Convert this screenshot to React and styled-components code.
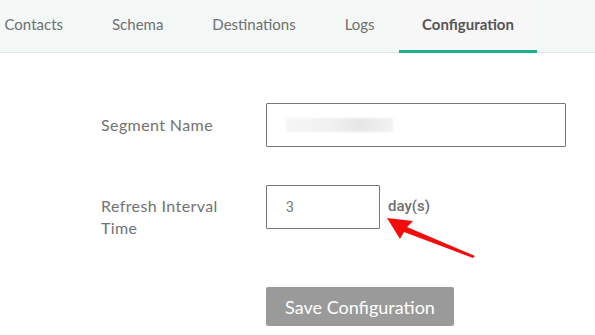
import styled, { createGlobalStyle } from 'styled-components';

const GlobalStyle = createGlobalStyle`
  body {
    margin: 0;
    background: #fff;
    font-family: Lato, "Open Sans", sans-serif;
  }
`;

const Page = styled.div`
  width: 595px;
  height: 335px;
  overflow: hidden;
  position: relative;
`;

const TabBar = styled.div`
  display: flex;
  height: 52px;
  background: #f3f8f7;
  border-bottom: 1px solid #e3e6e5;
  margin-left: -20px;
`;

const Tab = styled.div`
  display: flex;
  align-items: center;
  padding: 0 ${({ active }) => active ? 23 : 24.5}px 3px;
  font-size: 15px;
  color: ${({ active }) => active ? '#555' : '#6f6f6f'};
  font-weight: ${({ active }) => active ? 700 : 400};
  background: ${({ active }) => active ? '#f7f7f7' : 'transparent'};
  border-bottom: 3px solid ${({ active }) => active ? '#1bb08f' : 'transparent'};
  margin-bottom: -1px;
`;

const Form = styled.div`
  display: flex;
  flex-direction: column;
  gap: 38px;
  padding: 50px 0 0 101px;
`;

const Row = styled.div`
  display: flex;
  align-items: ${({ top }) => top ? 'flex-start' : 'center'};
  margin-top: ${({ offset }) => offset || 0}px;
`;

const Label = styled.div`
  width: 165px;
  font-size: 16px;
  line-height: 22px;
  color: #727272;
  letter-spacing: 0.4px;
  padding: ${({ top }) => top ? '10px 30px 0 0' : '0 30px 0 0'};
  box-sizing: border-box;
`;

const Input = styled.div`
  width: ${({ w }) => w}px;
  height: 44px;
  box-sizing: border-box;
  border: 1px solid #777;
  border-radius: 1px;
  display: flex;
  align-items: center;
  padding-left: 19px;
  font-family: Roboto, "Liberation Sans", sans-serif;
  font-size: 14px;
  color: #777;
`;

const Redacted = styled.div`
  width: 107px;
  height: 14px;
  background: linear-gradient(90deg, #f6f6f6 0%, #f1f1f1 40%, #e6e6e6 70%, #f2f2f2 100%);
  filter: blur(1px);
`;

const Unit = styled.span`
  margin-left: 8px;
  margin-top: 12px;
  font-family: Roboto, "Liberation Sans", sans-serif;
  font-size: 15px;
  font-weight: 500;
  color: #707070;
`;

const SaveButton = styled.button`
  width: 188px;
  height: 39px;
  background: #9a9a9a;
  border: none;
  border-radius: 2px;
  color: #fff;
  font-family: Lato, sans-serif;
  font-size: 18px;
  cursor: pointer;
`;

const Arrow = styled.svg`
  position: absolute;
  left: 0;
  top: 0;
  pointer-events: none;
`;

export default function App() {
  return (
    <Page>
      <GlobalStyle />
      <TabBar>
        <Tab>Contacts</Tab>
        <Tab>Schema</Tab>
        <Tab>Destinations</Tab>
        <Tab>Logs</Tab>
        <Tab active>Configuration</Tab>
      </TabBar>
      <Form>
        <Row>
          <Label>Segment Name</Label>
          <Input w={300}><Redacted /></Input>
        </Row>
        <Row top>
          <Label top>Refresh Interval Time</Label>
          <Input w={114}>3</Input>
          <Unit>day(s)</Unit>
        </Row>
        <Row offset={10}>
          <Label />
          <SaveButton>Save Configuration</SaveButton>
        </Row>
      </Form>
      <Arrow width="595" height="335">
        <path d="M387 218 L413 221 L407 227 L475 256 L473 258 L404 232 L400 239 Z" fill="#f20d0d" />
      </Arrow>
    </Page>
  );
}
